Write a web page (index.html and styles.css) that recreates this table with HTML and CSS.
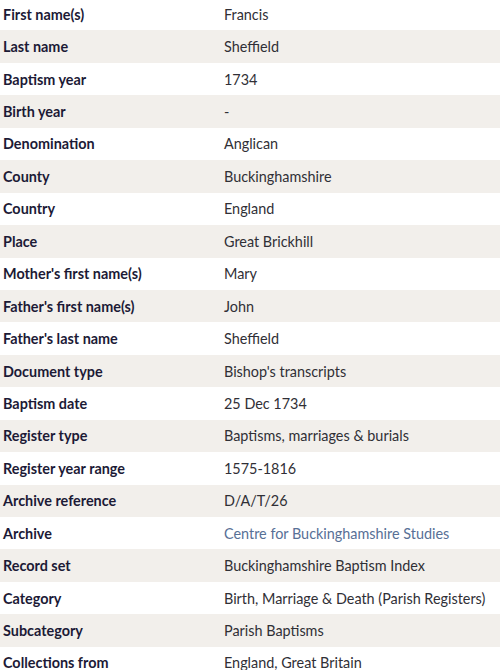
FILE: index.html
```html
<!DOCTYPE html>
<html lang="en">
  <head>
    <meta charset="UTF-8" />
    <title>Record</title>
    <link rel="stylesheet" href="styles.css">
  </head>
  <body>
    <div class="record">
      <div class="row"><div class="label">First name(s)</div><div class="value">Francis</div></div>
      <div class="row"><div class="label">Last name</div><div class="value">Sheffield</div></div>
      <div class="row"><div class="label">Baptism year</div><div class="value">1734</div></div>
      <div class="row"><div class="label">Birth year</div><div class="value">-</div></div>
      <div class="row"><div class="label">Denomination</div><div class="value">Anglican</div></div>
      <div class="row"><div class="label">County</div><div class="value">Buckinghamshire</div></div>
      <div class="row"><div class="label">Country</div><div class="value">England</div></div>
      <div class="row"><div class="label">Place</div><div class="value">Great Brickhill</div></div>
      <div class="row"><div class="label">Mother's first name(s)</div><div class="value">Mary</div></div>
      <div class="row"><div class="label">Father's first name(s)</div><div class="value">John</div></div>
      <div class="row"><div class="label">Father's last name</div><div class="value">Sheffield</div></div>
      <div class="row"><div class="label">Document type</div><div class="value">Bishop's transcripts</div></div>
      <div class="row"><div class="label">Baptism date</div><div class="value">25 Dec 1734</div></div>
      <div class="row"><div class="label">Register type</div><div class="value">Baptisms, marriages &amp; burials</div></div>
      <div class="row"><div class="label">Register year range</div><div class="value">1575-1816</div></div>
      <div class="row"><div class="label">Archive reference</div><div class="value">D/A/T/26</div></div>
      <div class="row"><div class="label">Archive</div><div class="value"><a href="#">Centre for Buckinghamshire Studies</a></div></div>
      <div class="row"><div class="label">Record set</div><div class="value">Buckinghamshire Baptism Index</div></div>
      <div class="row"><div class="label">Category</div><div class="value">Birth, Marriage &amp; Death (Parish Registers)</div></div>
      <div class="row"><div class="label">Subcategory</div><div class="value">Parish Baptisms</div></div>
      <div class="row"><div class="label">Collections from</div><div class="value">England, Great Britain</div></div>
    </div>
  </body>
</html>
```
FILE: styles.css
```css
* {
  margin: 0;
  padding: 0;
  box-sizing: border-box;
}
body {
  font-family: Lato, "Open Sans", sans-serif;
  font-size: 14.4px;
  background: #fff;
  overflow: hidden;
}
.record {
  margin-top: -2px;
}
.row {
  display: flex;
  align-items: center;
  height: 32.45px;
}
.row:nth-child(even) {
  background: #f2efeb;
}
.label {
  width: 224px;
  padding-left: 3px;
  font-weight: 700;
  color: #1c1a36;
}
.value {
  color: #302f36;
}
.value a {
  color: #587096;
  text-decoration: none;
}
```
